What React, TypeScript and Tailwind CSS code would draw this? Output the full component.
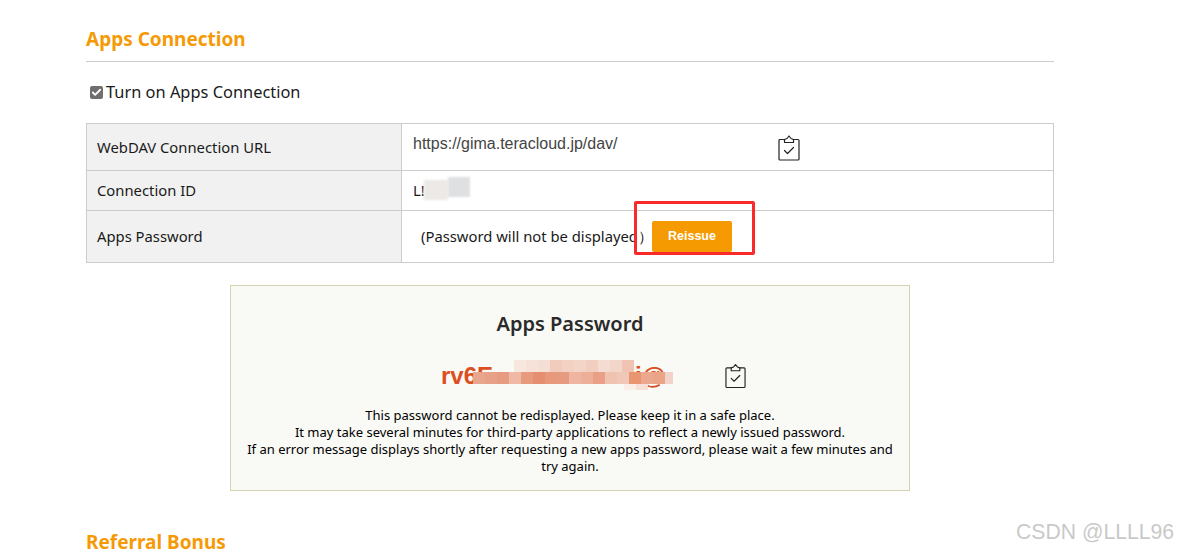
import { Check } from "lucide-react";

const FONT = "font-['Noto_Sans',sans-serif]";

const topRow = [
  "bg-[#f8e7df]", "bg-[#f6e2d9]", "bg-[#f5dfd5]", "bg-[#f1ccbd]", "bg-[#f2d0c2]",
  "bg-[#f3d5c8]", "bg-[#f1cfc0]", "bg-[#f5dcd2]", "bg-[#f3d6ca]", "bg-[#f0c3b2]",
];
const midRow = [
  "bg-[#e9a68e]", "bg-[#e8a088]", "bg-[#e69c80]", "bg-[#efb9a5]", "bg-[#e89a7e]",
  "bg-[#e68f70]", "bg-[#e8997c]", "bg-[#e69a80]", "bg-[#efb5a0]", "bg-[#edaf98]",
  "bg-[#e9a086]", "bg-[#f0c2b0]", "bg-[#f0c8b8]", "bg-[#e89570]", "bg-[#eca88e]",
  "bg-[#eaa488]",
];

function ClipboardIcon({ className }: { className?: string }) {
  return (
    <svg
      viewBox="0 0 22 26"
      fill="none"
      stroke="#222"
      strokeWidth="1.2"
      strokeLinejoin="round"
      strokeLinecap="round"
      className={className}
    >
      <path d="M6.5 4.5H2a1 1 0 0 0-1 1V24a1 1 0 0 0 1 1h18a1 1 0 0 0 1-1V5.5a1 1 0 0 0-1-1h-4.5" />
      <path d="M6.5 7.5V4.5L9 3.5 11 1l2 2.5 2.5 1v3z" />
      <path d="M6.5 15.5l3 3 6-6" />
    </svg>
  );
}

function Mosaic() {
  return (
    <div className="absolute left-[242px] top-[74px] flex w-[200px] flex-col items-start">
      <div className="ml-[41px] flex h-[12px]">
        {topRow.map((c, i) => (
          <div key={i} className={`h-[12px] w-[12px] ${c}`} />
        ))}
      </div>
      <div className="flex h-[12px]">
        {midRow.map((c, i) => (
          <div key={i} className={`h-[12px] w-[12px] ${c}`} />
        ))}
        <div className="h-[12px] w-[8px] bg-[#f2d3ca]" />
      </div>
      <div className="ml-[151px] flex h-[6px]">
        <div className="h-[6px] w-[12px] bg-[#fbeee8]" />
        <div className="h-[6px] w-[12px] bg-[#f8e0d8]" />
      </div>
    </div>
  );
}

export default function App() {
  return (
    <div className={`relative h-[552px] w-[1178px] overflow-hidden bg-white text-[15px] text-[#1a1a1a] ${FONT}`}>
      <div className="ml-[86px] w-[968px] pt-[25px]">
        <h2 className="border-b border-[#cccccc] pb-[7px] text-[19px] leading-[29px] font-bold text-[#f59a05]">
          Apps Connection
        </h2>

        <label className="mt-[18px] flex h-[24px] items-center pl-[4px] text-[16.4px]">
          <span className="flex h-[13px] w-[13px] items-center justify-center rounded-[2px] bg-[#6f6f6f]">
            <Check className="h-[11px] w-[11px] text-white" strokeWidth={4} />
          </span>
          <span className="ml-[3px]">Turn on Apps Connection</span>
        </label>

        <table className="mt-[19px] w-[968px] table-fixed border-collapse border border-[#cccccc] text-[14.8px]">
          <tbody>
            <tr className="h-[47px]">
              <th className="w-[315px] border border-[#cccccc] bg-[#f1f1f1] pl-[10px] text-left font-normal">
                WebDAV Connection URL
              </th>
              <td className="relative border border-[#cccccc] pl-[11px] align-top">
                <span className="mt-[10px] block font-['Liberation_Sans',sans-serif] text-[16px] leading-[20px] text-[#444444]">
                  https://gima.teracloud.jp/dav/
                </span>
                <ClipboardIcon className="absolute left-[376px] top-[11px] h-[26px] w-[22px]" />
              </td>
            </tr>
            <tr className="h-[40px]">
              <th className="border border-[#cccccc] bg-[#f1f1f1] pl-[10px] text-left font-normal">
                Connection ID
              </th>
              <td className="relative border border-[#cccccc] pl-[11px]">
                L!
                <span className="absolute left-[22px] top-[9px] h-[20px] w-[24px] bg-[#ece9e6] blur-[1px]" />
                <span className="absolute left-[46px] top-[6px] h-[20px] w-[22px] bg-[#dfe0e2] blur-[1px]" />
              </td>
            </tr>
            <tr className="h-[52px]">
              <th className="border border-[#cccccc] bg-[#f1f1f1] pl-[10px] text-left font-normal">
                Apps Password
              </th>
              <td className="border border-[#cccccc] pl-[19px]">
                <div className="flex items-center">
                  <span className="w-[231px] whitespace-nowrap">(Password will not be displayed）</span>
                  <button className="h-[31px] w-[80px] rounded-[2px] bg-[#f59a00] font-['Liberation_Sans',sans-serif] text-[12.5px] font-bold text-white">
                    Reissue
                  </button>
                </div>
              </td>
            </tr>
          </tbody>
        </table>

        <div className="relative mt-[22px] ml-[144px] h-[206px] w-[680px] border border-[#d6d3b2] bg-[#f9f9f5] text-center">
          <h3 className="mt-[23px] text-[20px] leading-[29px] font-semibold text-[#2a2a2a]">Apps Password</h3>
          <div className="relative mt-[22px] h-[32px]">
            <span className="absolute left-[210px] top-0 font-['Liberation_Sans',sans-serif] text-[24px] leading-[32px] font-bold text-[#dc4f22]">
              rv6E
            </span>
            <span className="absolute left-[404px] top-0 font-['Liberation_Sans',sans-serif] text-[24px] leading-[32px] font-bold text-[#dc4f22]">
              i@
            </span>
            <ClipboardIcon className="absolute left-[494px] top-[3px] h-[26px] w-[21px]" />
          </div>
          <Mosaic />
          <p className="mx-auto mt-[15px] w-[660px] text-[13px] leading-[17px] text-black">
            This password cannot be redisplayed. Please keep it in a safe place.
            <br />
            It may take several minutes for third-party applications to reflect a newly issued password.
            <br />
            If an error message displays shortly after requesting a new apps password, please wait a few minutes and try again.
          </p>
        </div>

        <h2 className="mt-[37px] text-[19px] leading-[29px] font-bold text-[#f59a05]">Referral Bonus</h2>
      </div>

      {/* annotation drawn over the screenshot */}
      <div className="absolute left-[634px] top-[201px] h-[54px] w-[121px] rounded-[2px] border-[3px] border-[#fb2a2a]" />
      <div className="absolute left-[1016px] top-[519px] font-['Liberation_Sans',sans-serif] text-[21.2px] leading-[26px] text-[#c9c9c9]">
        CSDN @LLLL96
      </div>
    </div>
  );
}
